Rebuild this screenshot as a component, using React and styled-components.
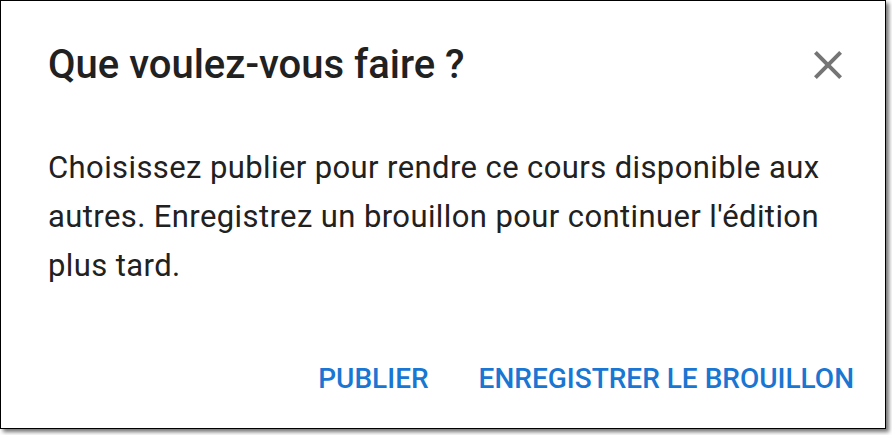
import React from "react";
import styled, { createGlobalStyle } from "styled-components";

const Global = createGlobalStyle`
  html, body {
    margin: 0;
    padding: 0;
    background: #ffffff;
  }
  body {
    font-family: Roboto, "Liberation Sans", sans-serif;
  }
`;

export default function App() {
  return (
    <>
      <Global />
      <Frame>
        <Dialog>
          <Header>
            <Title>Que voulez-vous faire ?</Title>
            <CloseButton aria-label="Fermer">
              <svg width="48" height="48" viewBox="0 0 24 24">
                <path
                  fill="currentColor"
                  d="M19 6.41 17.59 5 12 10.59 6.41 5 5 6.41 10.59 12 5 17.59 6.41 19 12 13.41 17.59 19 19 17.59 13.41 12z"
                />
              </svg>
            </CloseButton>
          </Header>
          <Body>
            Choisissez publier pour rendre ce cours disponible aux autres.
            Enregistrez un brouillon pour continuer l'édition plus tard.
          </Body>
          <Actions>
            <TextButton>Publier</TextButton>
            <TextButton>Enregistrer le brouillon</TextButton>
          </Actions>
        </Dialog>
      </Frame>
    </>
  );
}

const Frame = styled.div`
  width: 892px;
  height: 435px;
  box-sizing: border-box;
  padding: 0 6px 6px 0;
`;

const Dialog = styled.div`
  box-sizing: border-box;
  width: 886px;
  height: 429px;
  border: 1px solid #000;
  background: #fff;
  box-shadow: 3px 3px 4px rgba(0, 0, 0, 0.55);
  display: flex;
  flex-direction: column;
`;

const Header = styled.div`
  display: flex;
  align-items: center;
  justify-content: space-between;
  padding: 40px 33px 0 47px;
  height: 48px;
`;

const Title = styled.h2`
  margin: 0;
  font-size: 40px;
  line-height: 48px;
  font-weight: 500;
  color: #212121;
`;

const CloseButton = styled.button`
  border: none;
  background: none;
  padding: 0;
  color: #757575;
  display: flex;
  align-items: center;
  justify-content: center;
  width: 48px;
  height: 48px;
  cursor: pointer;
`;

const Body = styled.p`
  margin: 54px 40px 0 47px;
  font-size: 31px;
  letter-spacing: 0.4px;
  line-height: 49px;
  color: #212121;
`;

const Actions = styled.div`
  margin-top: auto;
  display: flex;
  justify-content: flex-end;
  gap: 50px;
  padding: 0 31px 33px 0;
`;

const TextButton = styled.button`
  border: none;
  background: none;
  padding: 0;
  font-family: Roboto, "Liberation Sans", sans-serif;
  font-size: 28px;
  line-height: 33px;
  font-weight: 500;
  text-transform: uppercase;
  color: #1976d2;
  cursor: pointer;
`;
